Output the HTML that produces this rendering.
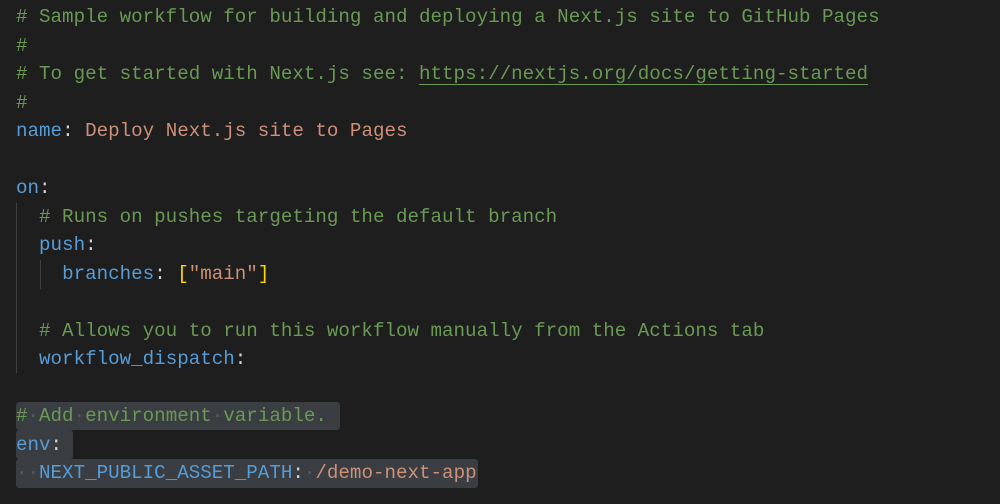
<!DOCTYPE html>
<html><head><meta charset="utf-8"><style>
html,body{margin:0;padding:0;background:#1e1e1e;width:1000px;height:504px;overflow:hidden}
.ed{position:absolute;left:16px;top:3px;font-family:"Liberation Mono",monospace;font-size:19.2px;line-height:28.5px;color:#d4d4d4}
.l{height:28.5px;white-space:pre}
.c{color:#6a9955}.k{color:#569cd6}.s{color:#ce9178}.b{color:#ffd700}
.u{text-decoration:underline;text-underline-offset:5px}
.sel{position:absolute;background:#3a3d41;border-radius:3px}
.g{position:absolute;width:1px;background:#404040}
.d{color:#5a5a5a}
</style></head><body>
<div class="sel" style="left:16px;top:402px;width:324px;height:28px"></div>
<div class="sel" style="left:16px;top:430px;width:57px;height:29px"></div>
<div class="sel" style="left:16px;top:459px;width:462px;height:29px"></div>
<div class="g" style="left:16px;top:203px;height:170px"></div>
<div class="g" style="left:40px;top:260px;height:29px"></div>
<div class="ed"><div class="l c"># Sample workflow for building and deploying a Next.js site to GitHub Pages</div><div class="l c">#</div><div class="l c"># To get started with Next.js see: <span class="u">https://nextjs.org/docs/getting-started</span></div><div class="l c">#</div><div class="l"><span class="k">name</span>: <span class="s">Deploy Next.js site to Pages</span></div><div class="l"></div><div class="l"><span class="k">on</span>:</div><div class="l c">  # Runs on pushes targeting the default branch</div><div class="l">  <span class="k">push</span>:</div><div class="l">    <span class="k">branches</span>: <span class="b">[</span><span class="s">"main"</span><span class="b">]</span></div><div class="l"></div><div class="l c">  # Allows you to run this workflow manually from the Actions tab</div><div class="l">  <span class="k">workflow_dispatch</span>:</div><div class="l"></div><div class="l c">#<span class="d">·</span>Add<span class="d">·</span>environment<span class="d">·</span>variable.</div><div class="l"><span class="k">env</span>:</div><div class="l"><span class="d">··</span><span class="k">NEXT_PUBLIC_ASSET_PATH</span>:<span class="d">·</span><span class="s">/demo-next-app</span></div></div>
</body></html>
